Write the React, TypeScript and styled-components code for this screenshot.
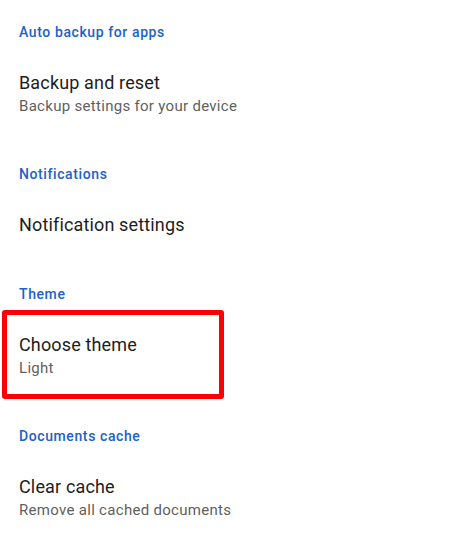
import React from "react";
import styled, { createGlobalStyle } from "styled-components";

const GlobalStyle = createGlobalStyle`
  html, body {
    margin: 0;
    padding: 0;
    background: #ffffff;
    overflow: hidden;
  }
  body {
    font-family: Roboto, "Noto Sans", "Liberation Sans", sans-serif;
    -webkit-font-smoothing: antialiased;
  }
`;

const Page = styled.div`
  width: 468px;
  height: 539px;
  overflow: hidden;
  background: #ffffff;
  display: flex;
  flex-direction: column;
  padding-top: 21.5px;
  box-sizing: border-box;
`;

const Section = styled.section`
  display: flex;
  flex-direction: column;
  padding-bottom: 46.5px;
`;

const CategoryTitle = styled.h2`
  margin: 0;
  padding: 0 19px;
  font-size: 14px;
  line-height: 20px;
  font-weight: 500;
  letter-spacing: 0.6px;
  color: #1b62c9;
`;

const Item = styled.div`
  position: relative;
  display: flex;
  flex-direction: column;
  padding: 29.5px 19px 0;
`;

const ItemTitle = styled.div`
  font-size: 18px;
  line-height: 24px;
  font-weight: 400;
  letter-spacing: 0.15px;
  color: #1d1d1d;
`;

const ItemSummary = styled.div`
  font-size: 15px;
  line-height: 22px;
  font-weight: 400;
  letter-spacing: 0.3px;
  color: #5f5f5f;
`;

const Highlight = styled.div`
  position: absolute;
  left: 2px;
  top: 6px;
  width: 222px;
  height: 89px;
  box-sizing: border-box;
  border: 5.5px solid #ff0000;
  border-radius: 3px;
  pointer-events: none;
`;

type Pref = {
  category: string;
  title: string;
  summary?: string;
  highlighted?: boolean;
};

const prefs: Pref[] = [
  {
    category: "Auto backup for apps",
    title: "Backup and reset",
    summary: "Backup settings for your device",
  },
  { category: "Notifications", title: "Notification settings" },
  { category: "Theme", title: "Choose theme", summary: "Light", highlighted: true },
  {
    category: "Documents cache",
    title: "Clear cache",
    summary: "Remove all cached documents",
  },
];

export default function App() {
  return (
    <>
      <GlobalStyle />
      <Page>
        {prefs.map((p) => (
          <Section key={p.category}>
            <CategoryTitle>{p.category}</CategoryTitle>
            <Item>
              <ItemTitle>{p.title}</ItemTitle>
              {p.summary && <ItemSummary>{p.summary}</ItemSummary>}
              {p.highlighted && <Highlight />}
            </Item>
          </Section>
        ))}
      </Page>
    </>
  );
}
